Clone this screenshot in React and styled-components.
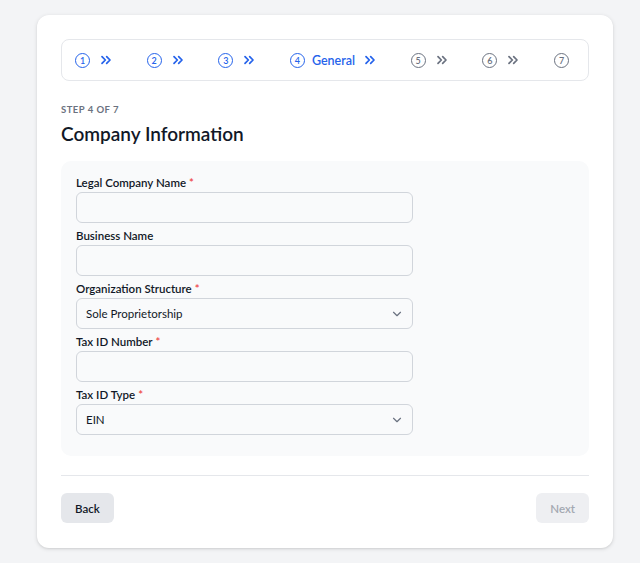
import React from 'react'
import styled, { createGlobalStyle } from 'styled-components'
import { ChevronsRight, ChevronDown } from 'lucide-react'

const GlobalStyle = createGlobalStyle`
  body {
    margin: 0;
    background: #f3f4f6;
    font-family: Lato, "Noto Sans", sans-serif;
    color: #111827;
  }
`;

const Page = styled.div`
  padding: 15px 27px 15px 37px;
`;

const Card = styled.div`
  background: #ffffff;
  border-radius: 12px;
  box-shadow: 0 1px 4px rgba(0, 0, 0, 0.12), 0 1px 2px rgba(0, 0, 0, 0.06);
  padding: 24px 24px 25px;
`;

const Stepper = styled.ol`
  margin: 0;
  list-style: none;
  height: 42px;
  box-sizing: border-box;
  border: 1px solid #e5e7eb;
  border-radius: 8px;
  padding: 0 19px 0 13px;
  display: flex;
  align-items: center;
  justify-content: space-between;
`;

const Step = styled.li`
  display: flex;
  align-items: center;
  color: ${p => (p.$done ? '#2563eb' : '#6b7280')};
`;

const Circle = styled.span`
  width: 15px;
  height: 15px;
  box-sizing: border-box;
  border: 1.5px solid currentColor;
  border-radius: 50%;
  display: flex;
  align-items: center;
  justify-content: center;
  font-size: 9px;
  line-height: 1;
  font-weight: 600;
`;

const StepLabel = styled.span`
  margin-left: 7px;
  font-size: 12.5px;
  font-weight: 600;
`;

const Arrow = styled(ChevronsRight)`
  margin-left: ${p => (p.$wide ? '7px' : '8px')};
`;

const Eyebrow = styled.div`
  margin-top: 22px;
  font-size: 9.5px;
  line-height: 14px;
  font-weight: 700;
  letter-spacing: 0.05em;
  text-transform: uppercase;
  color: #6b7280;
`;

const Title = styled.h1`
  margin: 3px 0 0;
  font-size: 19px;
  line-height: 28px;
  font-weight: 600;
  color: #111827;
`;

const Panel = styled.div`
  margin-top: 13px;
  background: #f9fafb;
  border-radius: 10px;
  padding: 15px 15px 21px;
  display: flex;
  flex-direction: column;
  gap: 6px;
`;

const Field = styled.div`
  display: flex;
  flex-direction: column;
`;

const Label = styled.label`
  font-size: 11.5px;
  line-height: 14px;
  font-weight: 600;
  color: #111827;
  margin-bottom: 2px;
`;

const Required = styled.span`
  color: #ef4444;
  margin-left: 3px;
`;

const Input = styled.input`
  width: 337px;
  height: 31px;
  box-sizing: border-box;
  border: 1px solid #d1d5db;
  border-radius: 6px;
  background: #f9fafb;
  padding: 0 9px;
  font-family: inherit;
  font-size: 11.5px;
  color: #111827;
  outline: none;
`;

const SelectBox = styled.div`
  width: 337px;
  height: 31px;
  box-sizing: border-box;
  border: 1px solid #d1d5db;
  border-radius: 6px;
  background: #f9fafb;
  padding: 0 8px 0 9px;
  display: flex;
  align-items: center;
  justify-content: space-between;
  font-size: 11.5px;
  color: #111827;
`;

const Divider = styled.hr`
  margin: 19px 0 0;
  border: none;
  border-top: 1.5px solid #e5e7eb;
`;

const Footer = styled.div`
  margin-top: 17px;
  display: flex;
  justify-content: space-between;
`;

const Button = styled.button`
  height: 30px;
  padding: 0 14px;
  border: none;
  border-radius: 6px;
  font-family: inherit;
  font-size: 11.5px;
  font-weight: 600;
  background: ${p => (p.$disabled ? '#eeeff2' : '#e5e7eb')};
  color: ${p => (p.$disabled ? '#a3a8b1' : '#111827')};
`;

const steps = [
  { n: 1, done: true },
  { n: 2, done: true },
  { n: 3, done: true },
  { n: 4, done: true, label: 'General' },
  { n: 5 },
  { n: 6 },
  { n: 7, last: true },
];

function TextField({ label, required }) {
  return (
    <Field>
      <Label>
        {label}
        {required && <Required>*</Required>}
      </Label>
      <Input />
    </Field>
  )
}

function SelectField({ label, value }) {
  return (
    <Field>
      <Label>
        {label}
        <Required>*</Required>
      </Label>
      <SelectBox>
        <span>{value}</span>
        <ChevronDown size={14} color="#6b7280" strokeWidth={2} />
      </SelectBox>
    </Field>
  )
}

export default function App() {
  return (
    <Page>
      <GlobalStyle />
      <Card>
        <Stepper>
          {steps.map(s => (
            <Step key={s.n} $done={s.done}>
              <Circle>{s.n}</Circle>
              {s.label && <StepLabel>{s.label}</StepLabel>}
              {!s.last && <Arrow size={16} strokeWidth={2.6} $wide={!!s.label} />}
            </Step>
          ))}
        </Stepper>
        <Eyebrow>Step 4 of 7</Eyebrow>
        <Title>Company Information</Title>
        <Panel>
          <TextField label="Legal Company Name" required />
          <TextField label="Business Name" />
          <SelectField label="Organization Structure" value="Sole Proprietorship" />
          <TextField label="Tax ID Number" required />
          <SelectField label="Tax ID Type" value="EIN" />
        </Panel>
        <Divider />
        <Footer>
          <Button>Back</Button>
          <Button $disabled>Next</Button>
        </Footer>
      </Card>
    </Page>
  )
}
